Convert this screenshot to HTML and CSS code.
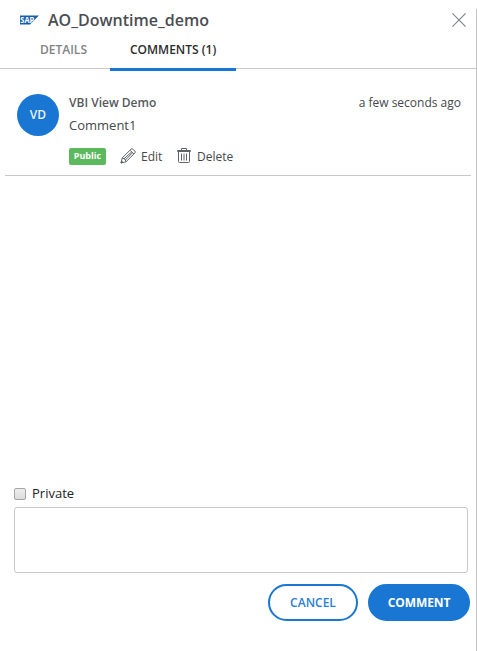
FILE: index.html
```html
<!DOCTYPE html>
<html lang="en">
<head>
<meta charset="utf-8">
<title>AO_Downtime_demo</title>
<link rel="stylesheet" href="styles.css">
</head>
<body>
<main class="panel">
  <header class="header">
    <svg class="logo" viewBox="0 0 19 10"><path d="M0 .5H19L10 9.5H0Z" fill="#1b5fac"/><text x="0.3" y="8" textLength="14" lengthAdjust="spacingAndGlyphs">SAP</text></svg>
    <h1 class="title">AO_Downtime_demo</h1>
    <svg class="close" viewBox="0 0 14 14"><path d="M.4.4 13.6 13.6M13.6.4.4 13.6"/></svg>
  </header>
  <nav class="tabs">
    <a class="tab">DETAILS</a>
    <a class="tab active">COMMENTS (1)</a>
  </nav>
  <article class="comment">
    <div class="avatar">VD</div>
    <div class="body">
      <div class="meta"><span class="author">VBI View Demo</span><time class="time">a few seconds ago</time></div>
      <p class="text">Comment1</p>
      <div class="actions">
        <span class="badge">Public</span>
        <svg class="pencil" viewBox="0 0 16 16"><path d="M1 15 2.2 10 11.2 1Q12 .3 13 1.2L14.8 3Q15.7 4 15 4.8L6 13.8ZM2.2 10Q5.7 10.3 6 13.8M10 2.2 13.8 6M4 10.8 11.8 3.8M5.4 12 12.6 4.6M1 15 3 14.4 1.6 13Z"/></svg>
        <span class="edit">Edit</span>
        <svg class="trash" viewBox="0 0 14 16"><path d="M.5 3.5V2.5H13.5V3.5ZM4.5 2.5V.5H9.5V2.5M1.5 4V13.5Q1.5 14.5 2.5 14.5H11.5Q12.5 14.5 12.5 13.5V4M4.5 5.5V12.5M7 5.5V12.5M9.5 5.5V12.5"/></svg>
        <span class="delete">Delete</span>
      </div>
    </div>
  </article>
  <form class="composer">
    <label class="private"><input class="check" type="checkbox"><span>Private</span></label>
    <textarea class="input"></textarea>
    <div class="buttons">
      <button class="btn cancel" type="button">CANCEL</button>
      <button class="btn submit" type="button">COMMENT</button>
    </div>
  </form>
</main>
</body>
</html>
```

FILE: styles.css
```css
* { box-sizing: border-box; }
body { margin: 0; background: #fff; font-family: "Open Sans", sans-serif; font-size: 13px; color: #45484b; }
.panel { height: 642px; margin-top: 9px; border-right: 1px solid #c4c4c4; display: flex; flex-direction: column; }
.header { height: 22px; padding: 0 10px 0 20px; display: flex; align-items: center; flex: none; }
.logo { width: 19px; height: 10px; margin-right: 9px; }
.logo text { font: bold 8px "Open Sans", sans-serif; fill: #fff; }
.title { margin: 0; font-size: 16px; font-weight: 600; line-height: 22px; color: #4b4e51; }
.close { width: 14px; height: 14px; margin-left: auto; fill: none; stroke: #85888b; stroke-width: 1.2; }
.tabs { height: 38px; flex: none; display: flex; padding-left: 20px; border-bottom: 1px solid #c8c8c8; }
.tab { height: 40px; padding: 10px 20px 0; width: 90px; font-size: 12px; line-height: 17px; font-weight: 600; color: #818385; white-space: nowrap; }
.tab.active { width: 126px; color: #2c2c2c; border-bottom: 3px solid #1976d2; }
.comment { display: flex; flex: none; height: 107px; margin: 0 5px; padding: 25px 10px 0 12px; border-bottom: 1px solid #c8c8c8; }
.avatar { width: 42px; height: 42px; border-radius: 50%; background: #1976d2; color: #e9f2fb; font-size: 12px; font-weight: 600; line-height: 42px; text-align: center; margin-right: 10px; }
.body { flex: 1; }
.meta { display: flex; justify-content: space-between; height: 18px; line-height: 18px; }
.author { font-size: 12px; font-weight: 600; color: #56595c; }
.time { font-size: 12px; }
.text { margin: 4px 0 0; line-height: 18px; }
.actions { display: flex; align-items: center; height: 18px; margin-top: 13px; font-size: 12px; }
.badge { width: 37px; height: 17px; border-radius: 2px; background: #5cb85c; color: #fff; font-size: 9px; font-weight: 700; line-height: 16px; text-align: center; margin-right: 14px; }
.pencil, .trash { fill: none; stroke: #606366; stroke-width: 1; }
.pencil { width: 16px; height: 16px; margin-right: 5px; }
.trash { width: 14px; height: 16px; margin-right: 6px; }
.edit { width: 36px; }
.composer { margin: auto 6px 30px 14px; }
.private { display: flex; align-items: center; height: 18px; margin-bottom: 5px; color: #222; }
.check { appearance: none; width: 12px; height: 12px; margin: 2px 6px 0 0; border: 1px solid #a5a5a5; border-radius: 2px; background: linear-gradient(#eee, #dcdcdc); }
.input { display: block; width: 454px; height: 66px; border: 1px solid #c8c8c8; border-radius: 3px; resize: none; }
.buttons { display: flex; justify-content: flex-end; gap: 10px; margin-top: 11px; }
.btn { height: 37px; border: 2px solid #1976d2; border-radius: 19px; padding: 0; font: 600 12px "Open Sans", sans-serif; }
.cancel { width: 90px; background: #fff; color: #2a80d5; }
.submit { width: 102px; background: #1976d2; color: #fff; font-weight: 700; letter-spacing: -0.1px; }
```
